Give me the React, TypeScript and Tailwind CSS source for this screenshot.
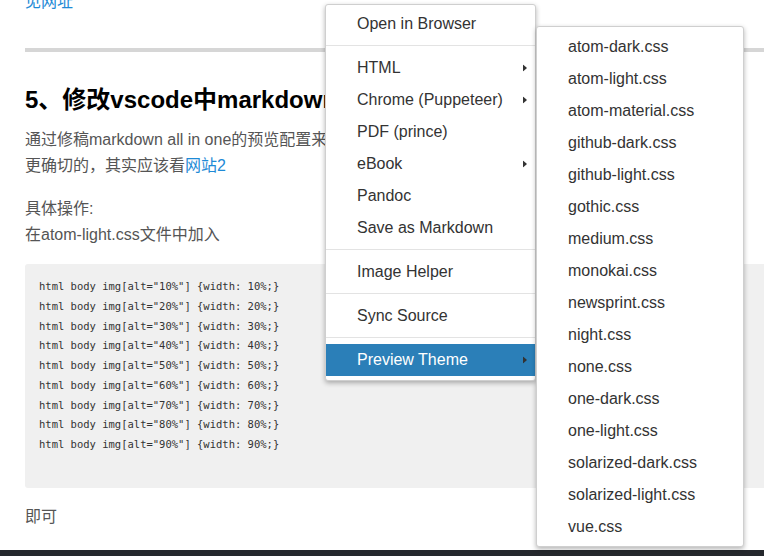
import React from 'react';

const codeLines = ['10', '20', '30', '40', '50', '60', '70', '80', '90'];

const themes = [
  'atom-dark.css',
  'atom-light.css',
  'atom-material.css',
  'github-dark.css',
  'github-light.css',
  'gothic.css',
  'medium.css',
  'monokai.css',
  'newsprint.css',
  'night.css',
  'none.css',
  'one-dark.css',
  'one-light.css',
  'solarized-dark.css',
  'solarized-light.css',
  'vue.css',
];

type Entry = { label: string; sub?: boolean; active?: boolean } | 'sep';

const menu: Entry[] = [
  { label: 'Open in Browser' },
  'sep',
  { label: 'HTML', sub: true },
  { label: 'Chrome (Puppeteer)', sub: true },
  { label: 'PDF (prince)' },
  { label: 'eBook', sub: true },
  { label: 'Pandoc' },
  { label: 'Save as Markdown' },
  'sep',
  { label: 'Image Helper' },
  'sep',
  { label: 'Sync Source' },
  'sep',
  { label: 'Preview Theme', sub: true, active: true },
];

function Arrow() {
  return (
    <svg width="4" height="7" viewBox="0 0 4 7" className="absolute right-[8px] top-1/2 -translate-y-1/2">
      <path d="M0 0 L4 3.5 L0 7 Z" fill="#333" />
    </svg>
  );
}

function ContextMenu() {
  return (
    <div className="absolute left-[325px] top-[4px] w-[211px] bg-white border border-[#cfcfcf] rounded-[3px] shadow-[0_2px_5px_rgba(0,0,0,0.3)] pt-[3px] pb-[4px] z-10">
      {menu.map((e, i) =>
        e === 'sep' ? (
          <div key={i} className="mt-[5px] mb-[6px] h-px bg-[#e3e3e3]" />
        ) : (
          <div
            key={i}
            className={`relative h-8 flex items-center pl-[31px] text-[16px] ${
              e.active ? 'bg-[#2b7fb8] text-white' : 'text-[#333]'
            }`}
          >
            {e.label}
            {e.sub && <Arrow />}
          </div>
        )
      )}
    </div>
  );
}

function ThemeMenu() {
  return (
    <div className="absolute left-[536px] top-[26px] w-[208px] bg-white border border-[#cfcfcf] rounded-[3px] shadow-[0_2px_5px_rgba(0,0,0,0.3)] pt-[4px] pb-[3px] z-20">
      {themes.map((t) => (
        <div key={t} className="h-8 flex items-center pl-[31px] text-[16px] text-[#333]">
          {t}
        </div>
      ))}
    </div>
  );
}

export default function App() {
  return (
    <div
      className="relative w-[764px] h-[556px] overflow-hidden bg-white flex flex-col"
      style={{ fontFamily: '"Liberation Sans", "Noto Sans CJK SC", sans-serif' }}
    >
      <div className="flex-1 pl-[25px] -mt-[11px] text-[16px] leading-[26px] text-[#555]">
        <p className="text-[#1e8ad6]">见网址</p>

        <div className="mt-[33px] h-1 bg-[#d6d6d6]" />

        <h2 className="mt-[33px] text-[24px] leading-[29px] font-bold text-black whitespace-nowrap">
          5、修改vscode中markdown预览样式
        </h2>

        <p className="mt-[13px]">
          通过修稿markdown all in one的预览配置来实现，
          <br />
          更确切的，其实应该看<span className="text-[#1e8ad6]">网站2</span>
        </p>

        <p className="mt-[17px]">
          具体操作:
          <br />
          在atom-light.css文件中加入
        </p>

        <pre
          className="mt-[16px] bg-[#f0f0f0] rounded-l-[3px] pl-[14px] pt-[13px] pb-[33px] text-[10.5px] leading-[19.75px] text-[#333]"
          style={{ fontFamily: '"DejaVu Sans Mono", monospace' }}
        >
          {codeLines.map((n) => (
            <div key={n}>{`html body img[alt="${n}%"] {width: ${n}%;}`}</div>
          ))}
        </pre>

        <p className="mt-[16px]">即可</p>
      </div>

      <div className="h-[6px] bg-[#25282d]" />

      <ContextMenu />
      <ThemeMenu />
    </div>
  );
}
